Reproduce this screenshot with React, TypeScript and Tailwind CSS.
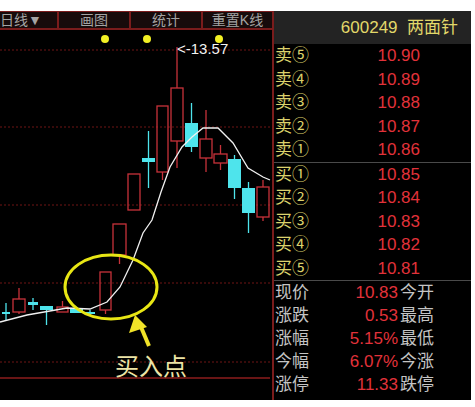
import React from 'react';

const FONT = { fontFamily: '"Liberation Sans", "Noto Sans CJK SC", sans-serif' };

// red hollow candles: body x0-x1, y0-y1, wick top/bottom
const redCandles = [
  { x0: 13, x1: 25, y0: 299, y1: 312, wt: 288, wb: 314 },
  { x0: 57, x1: 68, y0: 307, y1: 312, wt: 301, wb: 312 },
  { x0: 100, x1: 111, y0: 272, y1: 310, wt: 272, wb: 314 },
  { x0: 113, x1: 126, y0: 224, y1: 255, wt: 224, wb: 264 },
  { x0: 128, x1: 140, y0: 174, y1: 210, wt: 174, wb: 210 },
  { x0: 157, x1: 168, y0: 106, y1: 172, wt: 106, wb: 180 },
  { x0: 171, x1: 183, y0: 88, y1: 141, wt: 47, wb: 168 },
  { x0: 200, x1: 212, y0: 139, y1: 158, wt: 110, wb: 172 },
  { x0: 214, x1: 227, y0: 154, y1: 163, wt: 145, wb: 170 },
  { x0: 257, x1: 269, y0: 187, y1: 217, wt: 180, wb: 221 },
];

const cyanCandles = [
  { x0: 2, x1: 10, y0: 312, y1: 314, wt: 303, wb: 320 },
  { x0: 28, x1: 38, y0: 302, y1: 305, wt: 298, wb: 310 },
  { x0: 40, x1: 53, y0: 306, y1: 310, wt: 306, wb: 325 },
  { x0: 70, x1: 83, y0: 308, y1: 313, wt: 308, wb: 313 },
  { x0: 85, x1: 95, y0: 312, y1: 314, wt: 310, wb: 316 },
  { x0: 142, x1: 155, y0: 158, y1: 162, wt: 131, wb: 188 },
  { x0: 185, x1: 198, y0: 123, y1: 147, wt: 103, wb: 152 },
  { x0: 228, x1: 241, y0: 159, y1: 188, wt: 155, wb: 199 },
  { x0: 242, x1: 255, y0: 188, y1: 213, wt: 182, wb: 233 },
];

const maLine =
  '0,322 27,315 67,308 90,309 107,302 120,287 133,260 143,233 152,220 161,192 170,167 182,147 192,137 203,128 218,128 233,143 248,168 263,177 270,180';

const sells = [
  { label: '卖⑤', price: '10.90' },
  { label: '卖④', price: '10.89' },
  { label: '卖③', price: '10.88' },
  { label: '卖②', price: '10.87' },
  { label: '卖①', price: '10.86' },
];

const buys = [
  { label: '买①', price: '10.85' },
  { label: '买②', price: '10.84' },
  { label: '买③', price: '10.83' },
  { label: '买④', price: '10.82' },
  { label: '买⑤', price: '10.81' },
];

const stats = [
  { label: '现价', value: '10.83', next: '今开' },
  { label: '涨跌', value: '0.53', next: '最高' },
  { label: '涨幅', value: '5.15%', next: '最低' },
  { label: '今幅', value: '6.07%', next: '今涨' },
  { label: '涨停', value: '11.33', next: '跌停' },
];

function Chart() {
  return (
    <svg width={272} height={370} viewBox="0 30 272 370" className="block">
      {[50, 127, 205, 283, 362].map((y) => (
        <line key={y} x1={0} x2={270} y1={y} y2={y} stroke="#6e1414" strokeWidth={1} strokeDasharray="2 2" />
      ))}
      <line x1={0} x2={270} y1={378} y2={378} stroke="#8c1c1c" strokeWidth={1.5} />
      {[105, 147, 219].map((cx) => (
        <circle key={cx} cx={cx} cy={39} r={4} fill="#f2f024" />
      ))}
      {redCandles.map((c, i) => {
        const mid = (c.x0 + c.x1) / 2;
        return (
          <g key={`r${i}`} stroke="#c8323a" strokeWidth={1.3} fill="none">
            {c.wt < c.y0 ? <line x1={mid} x2={mid} y1={c.wt} y2={c.y0} /> : null}
            {c.wb > c.y1 ? <line x1={mid} x2={mid} y1={c.y1} y2={c.wb} /> : null}
            <rect x={c.x0} y={c.y0} width={c.x1 - c.x0} height={c.y1 - c.y0} />
          </g>
        );
      })}
      {cyanCandles.map((c, i) => {
        const mid = (c.x0 + c.x1) / 2;
        return (
          <g key={`c${i}`}>
            <line x1={mid} x2={mid} y1={c.wt} y2={c.wb} stroke="#4ee4ec" strokeWidth={1.3} />
            <rect x={c.x0} y={c.y0} width={c.x1 - c.x0} height={c.y1 - c.y0} fill="#4ee4ec" />
          </g>
        );
      })}
      <polyline points={maLine} fill="none" stroke="#f0f0f0" strokeWidth={1.3} />
      <text x={177} y={54} fill="#f4f4f4" fontSize={15} style={FONT}>
        {'<-13.57'}
      </text>
      <ellipse cx={111} cy={287} rx={46} ry={32} fill="none" stroke="#e8e614" strokeWidth={3} />
      <line x1={141} y1={327} x2={149} y2={346} stroke="#f0e228" strokeWidth={4} />
      <polygon points="135,315 129,333 147,327" fill="#f0e228" />
      <text x={115} y={375} fill="#ece4a6" fontSize={24} style={FONT}>
        买入点
      </text>
    </svg>
  );
}

function QuoteRow({ label, price }: { label: string; price: string }) {
  return (
    <div className="flex h-[23.5px] items-center">
      <span className="w-[61px] pl-[1px] text-[17px] leading-none text-[#dcd26c]">{label}</span>
      <span className="w-[85px] text-right text-[17px] leading-none text-[#e2323a]">{price}</span>
    </div>
  );
}

export default function App() {
  return (
    <div className="h-[407px] w-[475px] overflow-hidden bg-white pt-[11px]" style={FONT}>
      <div className="flex h-[389px] w-[471px] bg-black">
        <div className="flex w-[272px] flex-col">
          <div className="flex h-[19px] border-b-2 border-t border-[#7a1c1c] bg-[#170b0b] text-[14px] leading-none text-[#a4a4a4]">
            <div className="flex w-[59px] items-center border-r-2 border-[#7a1c1c]">日线▼</div>
            <div className="flex w-[72px] items-center justify-center border-r-2 border-[#7a1c1c]">画图</div>
            <div className="flex w-[72px] items-center justify-center border-r-2 border-[#7a1c1c]">统计</div>
            <div className="flex flex-1 items-center justify-center">重置K线</div>
          </div>
          <Chart />
        </div>
        <div className="flex w-[199px] flex-col border-l-2 border-[#7a1c1c]">
          <div className="flex h-[33px] items-center justify-end bg-[#232323] pr-[13px] text-[17px] text-[#e2d86a]">
            600249&nbsp;&nbsp;两面针
          </div>
          {sells.map((r) => (
            <QuoteRow key={r.label} {...r} />
          ))}
          <div className="h-px bg-[#4a4a4a]" />
          {buys.map((r) => (
            <QuoteRow key={r.label} {...r} />
          ))}
          <div className="h-px bg-[#4a4a4a]" />
          {stats.map((s) => (
            <div key={s.label} className="flex h-[23px] items-center text-[17px] leading-none">
              <span className="w-[61px] pl-[1px] text-[#c4c4c4]">{s.label}</span>
              <span className="w-[63px] text-right text-[#e2323a]">{s.value}</span>
              <span className="pl-[2px] text-[#c4c4c4]">{s.next}</span>
            </div>
          ))}
        </div>
      </div>
    </div>
  );
}
